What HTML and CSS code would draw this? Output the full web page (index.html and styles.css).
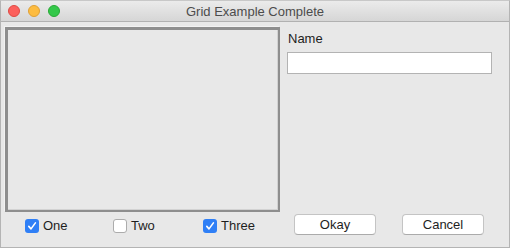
FILE: index.html
```html
<!DOCTYPE html>
<html>
<head>
<meta charset="utf-8">
<link rel="stylesheet" href="styles.css">
</head>
<body>
<div class="window">
  <div class="titlebar">
    <div class="lights">
      <span class="light red"></span>
      <span class="light yellow"></span>
      <span class="light green"></span>
    </div>
    <div class="title">Grid Example Complete</div>
  </div>
  <div class="content">
    <div class="panel"></div>
    <div class="side">
      <div class="label">Name</div>
      <div class="field"></div>
    </div>
    <div class="checks">
      <label class="check"><span class="box on"><svg viewBox="0 0 14 14" width="14" height="14"><path d="M3.8 7.4 L6 9.9 L10.4 3.9" fill="none" stroke="#fff" stroke-width="1.6" stroke-linecap="round" stroke-linejoin="round"/></svg></span>One</label>
      <label class="check"><span class="box"></span>Two</label>
      <label class="check"><span class="box on"><svg viewBox="0 0 14 14" width="14" height="14"><path d="M3.8 7.4 L6 9.9 L10.4 3.9" fill="none" stroke="#fff" stroke-width="1.6" stroke-linecap="round" stroke-linejoin="round"/></svg></span>Three</label>
    </div>
    <div class="buttons">
      <div class="btn ok">Okay</div>
      <div class="btn cancel">Cancel</div>
    </div>
  </div>
</div>
</body>
</html>
```
FILE: styles.css
```css
html, body { margin: 0; padding: 0; }
body {
  width: 510px; height: 248px; overflow: hidden;
  font-family: "Liberation Sans", Arial, sans-serif;
  font-size: 13px; color: #222;
}
.window {
  box-sizing: border-box;
  width: 510px; height: 248px;
  border: 1px solid #b4b4b4;
  border-top-color: #c8c8c8;
  background: #e8e8e8;
  display: flex; flex-direction: column;
}
.titlebar {
  box-sizing: border-box;
  height: 21px;
  background: linear-gradient(#ebebeb, #d6d6d6);
  border-bottom: 1px solid #b1b1b1;
  display: flex; align-items: center;
  position: relative;
}
.lights { display: flex; gap: 8px; padding-left: 7px; }
.light {
  box-sizing: border-box;
  width: 12px; height: 12px; border-radius: 50%;
  border: 1px solid;
}
.red { background: #fc605c; border-color: #de4a43; }
.yellow { background: #fdbc40; border-color: #dfa035; }
.green { background: #34c84a; border-color: #28a935; }
.title {
  position: absolute; left: 0; right: 0; top: 3px;
  text-align: center; color: #4c4c4c; font-size: 13px;
  line-height: 15px;
}
.content {
  display: grid;
  grid-template-columns: 275px 205px;
  grid-template-rows: 185px auto;
  column-gap: 7px;
  padding: 5px 0 0 4px;
}
.panel {
  box-sizing: border-box;
  border: 3px solid #8e8e8e;
  border-right-width: 2px; border-bottom-width: 2px;
  box-shadow: inset -1px -1px 0 #d2d2d2, -1px -1px 0 #f2f2f2;
  background: #e8e8e8;
}
.side { display: flex; flex-direction: column; padding-left: 1px; }
.label { margin-top: 4px; line-height: 15px; color: #1e1e1e; }
.field {
  box-sizing: border-box;
  margin-top: 6px; margin-left: -1px;
  width: 205px; height: 22px;
  background: #fff; border: 1px solid #b3b3b3;
}
.checks {
  display: grid;
  grid-template-columns: 88px 90px auto;
  padding-left: 20px; padding-top: 4px;
}
.check { display: flex; align-items: center; gap: 4px; line-height: 15px; color: #1e1e1e; }
.box {
  box-sizing: border-box;
  width: 14px; height: 14px; border-radius: 3px;
  background: #fff; border: 1px solid #acacac;
  display: block;
}
.box svg { display: block; }
.box.on { background: #2f7ff6; border: none; }
.buttons { display: flex; padding-top: 2px; padding-left: 7px; gap: 26px; }
.btn {
  box-sizing: border-box;
  width: 82px; height: 21px;
  background: #fff;
  border: 1px solid #c4c4c4; border-bottom-color: #ababab;
  border-radius: 4px;
  text-align: center; line-height: 19px; color: #1e1e1e;
}
```
